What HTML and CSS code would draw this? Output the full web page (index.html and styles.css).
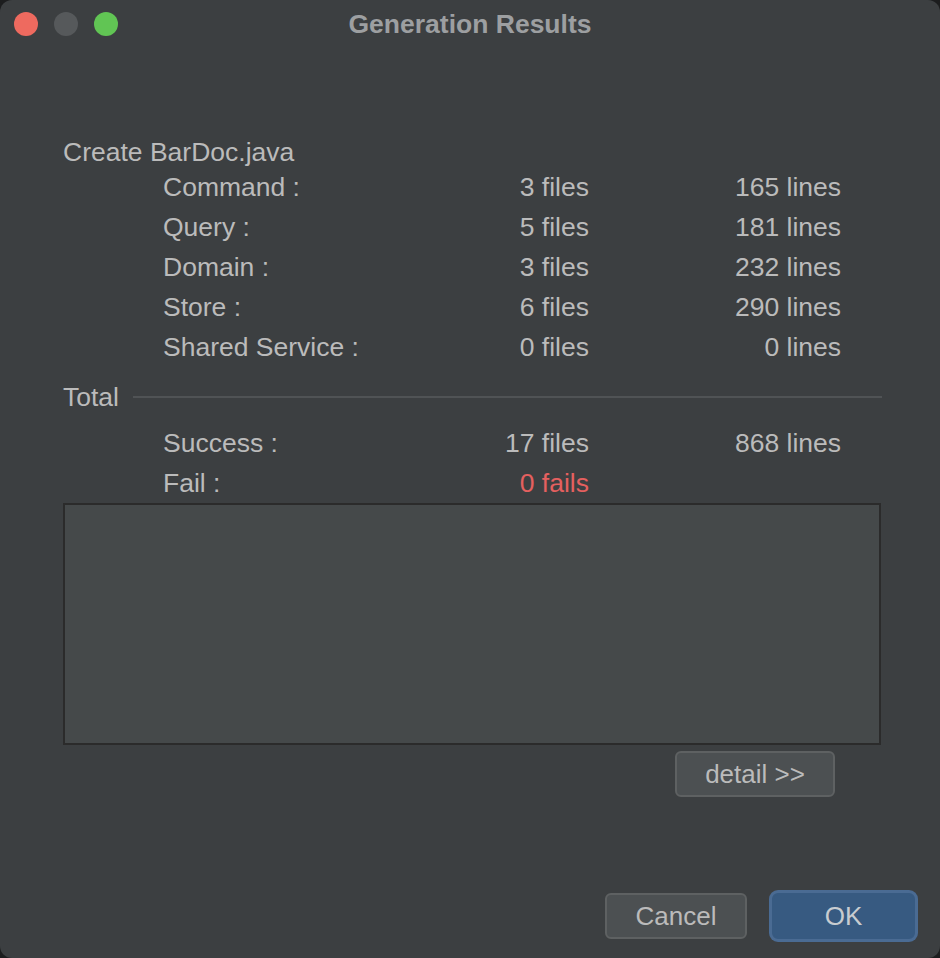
FILE: index.html
```html
<!DOCTYPE html>
<html lang="en">
<head>
<meta charset="utf-8">
<title>Generation Results</title>
<link rel="stylesheet" href="styles.css">
</head>
<body>
<div class="window">
  <header class="titlebar">
    <div class="lights">
      <span class="light red"></span>
      <span class="light gray"></span>
      <span class="light green"></span>
    </div>
    <h1 class="title">Generation Results</h1>
    <div></div>
  </header>
  <main class="content">
    <div class="heading">Create BarDoc.java</div>
    <div class="stats">
      <span class="label">Command :</span><span class="num">3 files</span><span class="num">165 lines</span>
      <span class="label">Query :</span><span class="num">5 files</span><span class="num">181 lines</span>
      <span class="label">Domain :</span><span class="num">3 files</span><span class="num">232 lines</span>
      <span class="label">Store :</span><span class="num">6 files</span><span class="num">290 lines</span>
      <span class="label">Shared Service :</span><span class="num">0 files</span><span class="num">0 lines</span>
    </div>
    <div class="section">
      <span class="section-title">Total</span>
      <span class="rule"></span>
    </div>
    <div class="stats totals">
      <span class="label">Success :</span><span class="num">17 files</span><span class="num">868 lines</span>
      <span class="label">Fail :</span><span class="num fail">0 fails</span><span class="num"></span>
    </div>
    <div class="log"></div>
    <div class="detail-row">
      <button class="btn detail">detail &gt;&gt;</button>
    </div>
  </main>
  <footer class="footer">
    <button class="btn cancel">Cancel</button>
    <button class="btn ok">OK</button>
  </footer>
</div>
</body>
</html>
```

FILE: styles.css
```css
html, body {
  margin: 0;
  padding: 0;
  background: #1c1d1e;
}
.window {
  width: 940px;
  height: 958px;
  background: #3c3f41;
  border-radius: 12px;
  display: flex;
  flex-direction: column;
  font-family: "Liberation Sans", Arial, sans-serif;
  color: #bbbbbb;
  overflow: hidden;
}
.titlebar {
  height: 48px;
  display: grid;
  grid-template-columns: 1fr auto 1fr;
  align-items: center;
}
.lights {
  display: flex;
  gap: 16px;
  padding-left: 14px;
}
.light {
  width: 24px;
  height: 24px;
  border-radius: 50%;
  display: block;
}
.red { background: #ee6a5f; }
.gray { background: #56595b; }
.green { background: #61c554; }
.title {
  margin: 0;
  font-size: 26.5px;
  font-weight: bold;
  color: #9d9fa1;
  line-height: 46px;
}
.content {
  padding: 89px 58px 0 63px;
  display: flex;
  flex-direction: column;
  font-size: 26.5px;
}
.heading {
  line-height: 30px;
}
.stats {
  display: grid;
  grid-template-columns: 1fr 150px 252px;
  padding-left: 100px;
  padding-right: 41px;
  grid-auto-rows: 40px;
  align-items: center;
}
.num {
  text-align: right;
}
.fail {
  color: #e5605f;
}
.section {
  display: flex;
  align-items: center;
  gap: 14px;
  height: 40px;
  margin-top: 10px;
}
.rule {
  flex: 1;
  height: 2px;
  background: #505355;
}
.totals {
  margin-top: 6px;
}
.log {
  height: 238px;
  margin-right: 1px;
  background: #45494a;
  border: 2px solid #2b2b2b;
}
.detail-row {
  display: flex;
  justify-content: flex-end;
  padding-right: 47px;
  margin-top: 6px;
}
.btn {
  font-family: "Liberation Sans", Arial, sans-serif;
  font-size: 26px;
  color: #bbbbbb;
  background: #4c5052;
  border: 2px solid #5e6162;
  border-radius: 6px;
  height: 46px;
  padding: 0;
}
.detail {
  width: 160px;
}
.footer {
  margin-top: auto;
  display: flex;
  justify-content: flex-end;
  gap: 25px;
  padding: 0 25px 19px 0;
}
.cancel {
  width: 142px;
}
.ok {
  width: 143px;
  background: #375a81;
  border-color: #375a81;
  color: #c8ccd0;
  box-shadow: 0 0 0 3px #4a6b93;
}
```
